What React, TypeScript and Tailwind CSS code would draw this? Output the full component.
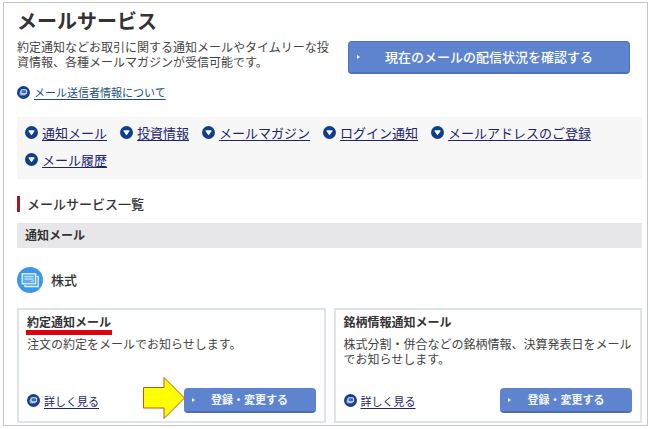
import React, { FC } from "react";

interface IMailCard {
  title: string;
  description: string;
  highlighted?: boolean;
}

const navLinks = [
  "通知メール",
  "投資情報",
  "メールマガジン",
  "ログイン通知",
  "メールアドレスのご登録",
  "メール履歴",
];

const mailCards: IMailCard[] = [
  {
    title: "約定通知メール",
    description: "注文の約定をメールでお知らせします。",
    highlighted: true,
  },
  {
    title: "銘柄情報通知メール",
    description:
      "株式分割・併合などの銘柄情報、決算発表日をメールでお知らせします。",
  },
];

const WindowIcon: FC = () => (
  <svg className="size-[13px] shrink-0" viewBox="0 0 12 12" aria-hidden="true">
    <circle cx="6" cy="6" r="6" fill="#17408a" />
    <rect x="2.4" y="4.8" width="5.4" height="4" rx="1" fill="#7d9fd6" />
    <rect
      x="3.7"
      y="3.5"
      width="5.2"
      height="3.8"
      rx="1"
      fill="#3d69b3"
      stroke="#dbe7f8"
      strokeWidth="1"
    />
  </svg>
);

const DownIcon: FC = () => (
  <svg className="size-[13px] shrink-0" viewBox="0 0 12 12" aria-hidden="true">
    <circle cx="6" cy="6" r="6" fill="#0f3f8c" />
    <path
      d="M3.7 4.5h4.6L6 7.9z"
      fill="#fff"
      stroke="#fff"
      strokeWidth="1"
      strokeLinejoin="round"
    />
  </svg>
);

const StockIcon: FC = () => (
  <svg className="size-[26px] shrink-0" viewBox="0 0 26 26" aria-hidden="true">
    <circle cx="13" cy="13" r="13" fill="#3b98e6" />
    <path
      d="M19.5 9.3h1.7v10.2H8v-1.6"
      fill="none"
      stroke="#e4f3ff"
      strokeWidth="1.3"
    />
    <rect
      x="5.2"
      y="6.8"
      width="13.4"
      height="10"
      fill="#5cadee"
      stroke="#e4f3ff"
      strokeWidth="1.3"
    />
    <path d="M7.5 9.7h8.8M7.5 12h8.8" stroke="#e4f3ff" strokeWidth="1" />
    <path d="M12.6 14.6h4v-1.4z" fill="#e4f3ff" />
  </svg>
);

const ButtonMark: FC = () => (
  <svg
    className="absolute left-2 top-1/2 h-1 w-[3px] -translate-y-1/2"
    viewBox="0 0 3 4"
    aria-hidden="true"
  >
    <path d="M0 0l3 2-3 2z" fill="#fff" />
  </svg>
);

const MailCard: FC<IMailCard> = ({ title, description, highlighted }) => {
  return (
    <section className="flex flex-col border-2 border-[#dce5e8] px-2 pt-1 pb-2">
      <h4 className="flex h-[22px] items-start text-[12px] leading-4 font-bold">
        <span
          className={
            highlighted ? "-ml-px border-b-[5px] border-[#d8060c] px-px" : ""
          }
        >
          {title}
        </span>
      </h4>
      <p className="grow text-[12px] leading-[15px] text-[#444]">
        {description}
      </p>
      <div className="mt-[22px] flex items-center justify-between">
        <a
          href="#detail"
          className="flex items-center gap-1 text-[11px] leading-4 text-[#20246e]"
        >
          <WindowIcon />
          <span className="underline underline-offset-2">詳しく見る</span>
        </a>
        <div className="relative flex">
          {highlighted && (
            <svg
              className="absolute -left-[42px] -top-[12px] z-10 h-[44px] w-[44px]"
              viewBox="0 0 44 44"
              aria-hidden="true"
            >
              <path
                d="M1.5 11.5H22V1.5L42.5 22 22 42.5V32H1.5z"
                fill="#ffff00"
                stroke="#b9541c"
                strokeWidth="1"
              />
            </svg>
          )}
          <button className="relative h-[25px] w-[132px] rounded-sm border-b-2 border-[#4d6db5] bg-[#5e84cf] text-[11px] font-bold text-[#f4f8ff]">
            <ButtonMark />
            登録・変更する
          </button>
        </div>
      </div>
    </section>
  );
};

const App: FC = () => {
  return (
    <div className="bg-white pt-0.5 pr-0.5 pb-[3px] pl-[3px] font-['Noto_Sans_CJK_JP','Noto_Sans',sans-serif] text-[#333]">
      <main className="border border-[#c4c4c4] pt-1 pr-[5px] pb-0.5 pl-[13px]">
        <div className="flex items-start gap-2">
          <div className="flex-1">
            <h1 className="text-[20px] leading-7 font-bold">メールサービス</h1>
            <p className="mt-1 text-[12px] leading-[15px] text-[#444]">
              約定通知などお取引に関する通知メールやタイムリーな投資情報、各種メールマガジンが受信可能です。
            </p>
            <a
              href="#sender"
              className="mt-[15px] flex items-center gap-1 text-[11px] leading-4 text-[#1d4f80]"
            >
              <WindowIcon />
              <span className="underline underline-offset-2">
                メール送信者情報について
              </span>
            </a>
          </div>
          <button className="relative mt-[34px] mr-3 h-[33px] w-[282px] rounded border border-b-2 border-[#4f71b8] bg-[#5e84cf] text-[13px] font-medium text-white">
            <ButtonMark />
            現在のメールの配信状況を確認する
          </button>
        </div>

        <nav className="mt-[17px] bg-[#f7f7f7] px-2 pt-0.5 pb-1.5">
          <ul className="flex flex-wrap gap-x-[13px]">
            {navLinks.map((label) => (
              <li key={label}>
                <a
                  href="#list"
                  className="flex h-[27px] items-center gap-1 text-[13px] text-[#20246e]"
                >
                  <DownIcon />
                  <span className="underline underline-offset-2">{label}</span>
                </a>
              </li>
            ))}
          </ul>
        </nav>

        <h2 className="mt-[17px] flex h-4 items-center border-l-[3px] border-[#9c1c20] pl-[7px] text-[13px] font-medium">
          メールサービス一覧
        </h2>
        <h3 className="mt-[11px] bg-[#e7e7ea] px-2 pb-0.5 text-[12px] leading-[23px] font-bold">
          通知メール
        </h3>

        <div className="mt-[19px] flex items-center gap-2">
          <StockIcon />
          <h3 className="text-[13px] leading-5 font-medium">株式</h3>
        </div>
        <div className="mt-[15px] grid grid-cols-2 gap-2">
          {mailCards.map((card) => (
            <MailCard key={card.title} {...card} />
          ))}
        </div>
      </main>
    </div>
  );
};

export default App;
